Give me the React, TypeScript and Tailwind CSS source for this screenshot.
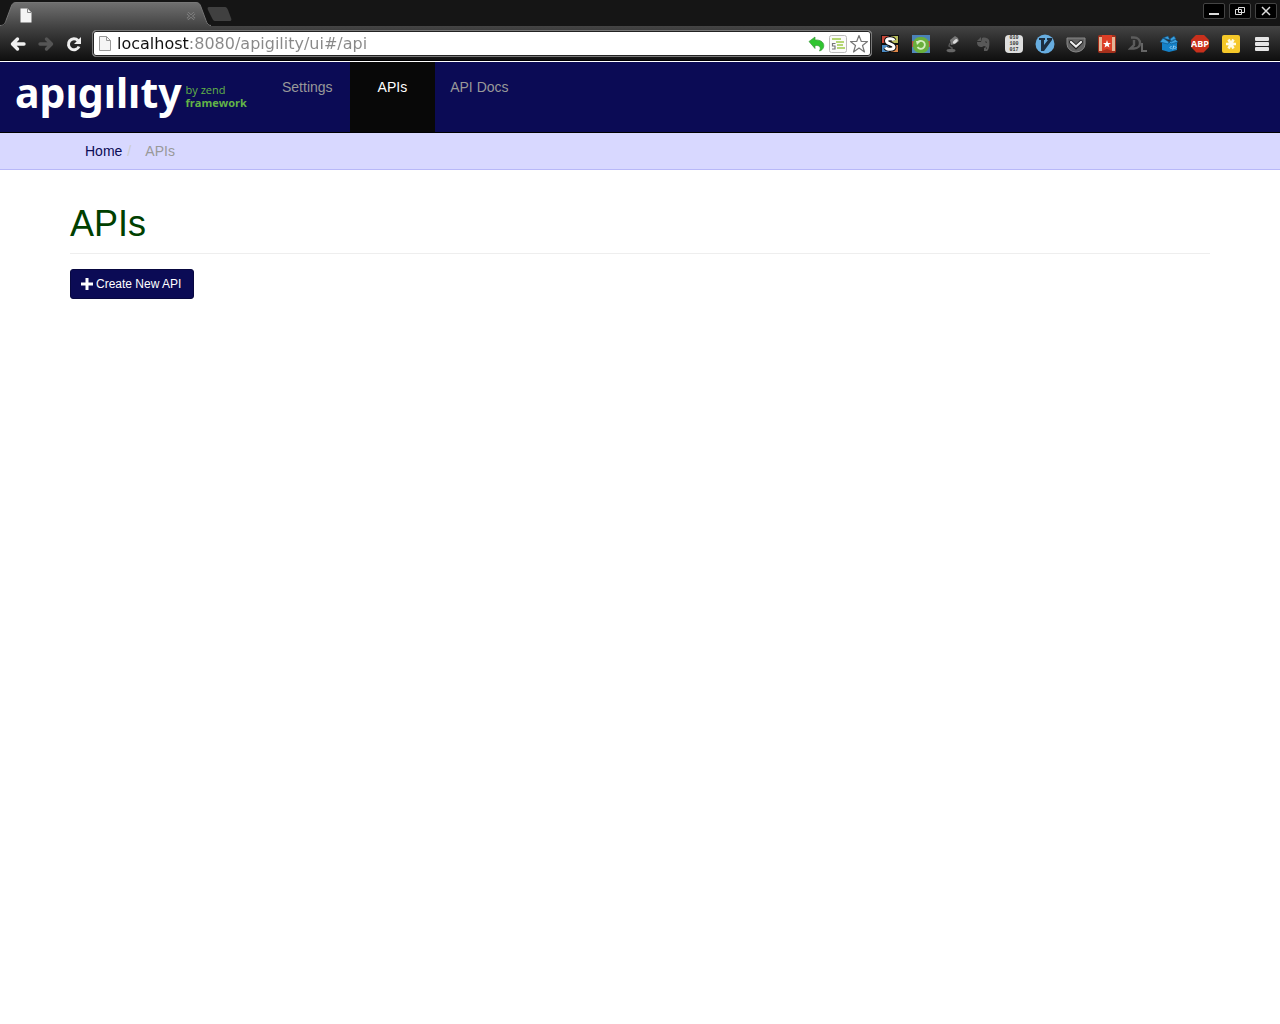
import type { ReactNode } from "react";

function ToolButton({ label, children }: { label: string; children: ReactNode }) {
  return (
    <button type="button" aria-label={label} title={label} className="flex h-5 w-5 shrink-0 items-center justify-center">
      {children}
    </button>
  );
}

function PageIcon({ fill, stroke }: { fill: string; stroke: string }) {
  return (
    <svg width="12" height="15" viewBox="0 0 12 15" aria-hidden="true">
      <path d="M.5.5h7l4 4v10H.5z" fill={fill} stroke={stroke} />
      <path d="M7.5.5v4h4" fill="none" stroke={stroke === "none" ? "#888" : stroke} />
    </svg>
  );
}

function ArrowIcon({ color, flip }: { color: string; flip?: boolean }) {
  return (
    <svg width="16" height="16" viewBox="0 0 16 16" className={flip ? "-scale-x-100" : ""} aria-hidden="true">
      <path d="M7.500 3 2.500 8l5 5M3 8h11" fill="none" stroke={color} strokeWidth="3.400" strokeLinecap="round" strokeLinejoin="round" />
    </svg>
  );
}

function TabStrip() {
  return (
    <div className="flex h-[26px] items-start justify-between bg-[#151515]">
      <div className="relative flex h-[26px] w-60 items-center">
        <svg width="240" height="26" viewBox="0 0 240 26" className="absolute inset-0" aria-hidden="true">
          <defs>
            <linearGradient id="tab" x1="0" y1="0" x2="0" y2="1">
              <stop offset="0" stopColor="#707070" />
              <stop offset="1" stopColor="#444" />
            </linearGradient>
          </defs>
          <path d="M0 26c4 0 5-2 6-5l5-14c1-3 2-4.500 5-4.500h180c3 0 4 1.500 5 4.500l5 14c1 3 2 5 5 5z" fill="url(#tab)" />
          <path d="M0 25.500c4 0 5-2 6-5l5-13.500c1-3 2-4.500 5-4.500h180c3 0 4 1.500 5 4.500l5 13.500c1 3 2 5 5 5" fill="none" stroke="#777" />
          <path d="M209 7h15c2 0 3 .500 4 3l3 8c1 2.500 0 3-2 3h-13c-2 0-3-.500-4-3l-4-8c-.800-2-.500-3 1-3z" fill="#404040" />
        </svg>
        <span className="relative ml-5 mt-1"><PageIcon fill="#f4f4f4" stroke="none" /></span>
        <button type="button" aria-label="Close tab" className="relative ml-[154px] mt-[6px] h-[10px] w-[10px]">
          <svg width="10" height="10" viewBox="0 0 10 10" aria-hidden="true">
            <path d="m1.500 2 7 6m0-6-7 6" stroke="#8c8c8c" strokeWidth="2.600" />
            <path d="m1.500 2 7 6m0-6-7 6" stroke="#555" strokeWidth="1.400" />
          </svg>
        </button>
      </div>
      <div className="mr-[3px] mt-[3px] flex gap-1">
        {["Minimize", "Restore", "Close"].map((name) => (
          <button key={name} type="button" aria-label={name} className="flex h-4 w-[22px] items-center justify-center rounded-xs border border-[#444] bg-black">
            <svg width="14" height="12" viewBox="0 0 14 12" fill="none" stroke="#ddd" aria-hidden="true">
              {name === "Minimize" && <path d="M2 9h10" strokeWidth="2" />}
              {name === "Restore" && <path d="M5.500 2.500h6v5h-6zM2.500 4.500h6v5h-6z" />}
              {name === "Close" && <path d="m3 2 8 8m0-8-8 8" strokeWidth="1.500" />}
            </svg>
          </button>
        ))}
      </div>
    </div>
  );
}

function Extensions() {
  return (
    <div className="flex items-center gap-[11px] px-2">
      <ToolButton label="Stylish">
        <svg width="20" height="20" viewBox="0 0 20 20" aria-hidden="true">
          <path d="M1 1h18v18H1z" fill="#111" />
          <path d="M2 2h7v7H2z" fill="#c8493a" /><path d="M11 2h7v7h-7z" fill="#b9bd5c" />
          <path d="M2 11h7v7H2z" fill="#4a8ac4" /><path d="M11 11h7v7h-7z" fill="#dd8548" />
          <path d="M14 6.500C13 4 6.500 4 6.500 7c0 3.200 7.500 2.500 7.500 6 0 3-7 3-8.500.500" fill="none" stroke="#111" strokeWidth="5" />
          <path d="M14 6.500C13 4 6.500 4 6.500 7c0 3.200 7.500 2.500 7.500 6 0 3-7 3-8.500.500" fill="none" stroke="#fff" strokeWidth="3" />
        </svg>
      </ToolButton>
      <ToolButton label="Session reload">
        <svg width="20" height="20" viewBox="0 0 20 20" aria-hidden="true">
          <path d="M1 1h18v6H1z" fill="#4b82b8" /><path d="M1 7h18v6H1z" fill="#b5524b" /><path d="M1 13h18v6H1z" fill="#5088bd" />
          <rect x="2" y="3" width="16" height="16" rx="7" fill="#6aaf3c" />
          <path d="M7 8a4 4 0 1 1-.500 5" fill="none" stroke="#d5efc0" strokeWidth="1.800" />
          <path d="M5 7h5l-4 4z" fill="#d5efc0" />
        </svg>
      </ToolButton>
      <ToolButton label="Desk lamp">
        <svg width="20" height="20" viewBox="0 0 20 20" aria-hidden="true">
          <path d="m8 6 5-4 3 2 1 3-4 3-4 1z" fill="#777" /><ellipse cx="13" cy="7.500" rx="3" ry="1.600" fill="#ddd" transform="rotate(-40 13 7)" />
          <path d="m8 9-1 3 3 2v2" fill="none" stroke="#555" strokeWidth="1.500" /><ellipse cx="9" cy="16.500" rx="4.500" ry="1.800" fill="#666" />
        </svg>
      </ToolButton>
      <ToolButton label="Evernote">
        <svg width="20" height="20" viewBox="0 0 20 20" aria-hidden="true">
          <path d="m4 7 4-4v4zM4 8h4l1-4c3-1 6 0 7 2 1 4 0 10-2 11h-3v-3l2-1v2c2 0 0-3-2-3l-2 1c-3 0-5-1-5-5z" fill="#585858" />
          <path d="M12 8c1-1 2 0 2 1z" fill="#222" />
        </svg>
      </ToolButton>
      <ToolButton label="Binary notes">
        <span className="flex h-[18px] w-[18px] flex-col items-center justify-center rounded-sm bg-[#dedede] font-['Liberation_Mono',monospace] text-[5px] font-bold leading-[6px] text-[#333]">
          <span>010</span><span>100</span><span>017</span>
        </span>
      </ToolButton>
      <ToolButton label="Vimium">
        <svg width="20" height="20" viewBox="0 0 20 20" aria-hidden="true">
          <circle cx="10" cy="10" r="9.500" fill="#67ade0" />
          <path d="M4 4h6v2H9v5l4-5h-1V4h5v2L9 17H6V6H4z" fill="#1c2e40" />
        </svg>
      </ToolButton>
      <ToolButton label="Pocket">
        <svg width="20" height="20" viewBox="0 0 20 20" aria-hidden="true">
          <path d="M1 4h18v6a9 8 0 0 1-18 0z" fill="#626262" stroke="#888" />
          <path d="m5 8 5 5 5-5" fill="none" stroke="#222" strokeWidth="4" strokeLinecap="round" />
          <path d="m5 8 5 4.500L15 8" fill="none" stroke="#eee" strokeWidth="2.200" strokeLinecap="round" />
        </svg>
      </ToolButton>
      <ToolButton label="Wunderlist">
        <svg width="20" height="20" viewBox="0 0 20 20" aria-hidden="true">
          <rect x="1" y="1" width="18" height="18" rx="2" fill="#a5301c" />
          <path d="M2 3h3v14H2zM15 3h3v14h-3z" fill="#e3b596" /><path d="M5 1h10v16l-5-2-5 2z" fill="#dc3e26" />
          <path d="m10 6 1 3h3l-2.300 1.700.800 2.800L10 12l-2.500 1.500.800-2.800L6 9h3z" fill="#fff" />
        </svg>
      </ToolButton>
      <ToolButton label="Delicious">
        <svg width="20" height="20" viewBox="0 0 20 20" fill="none" aria-hidden="true">
          <path d="M3 3.500h3c8 0 8 11 0 11H2.500L6 11V6" stroke="#5c5c5c" strokeWidth="2.400" />
          <path d="M14 9v8h5" stroke="#666" strokeWidth="2" />
        </svg>
      </ToolButton>
      <ToolButton label="Developer box">
        <svg width="20" height="20" viewBox="0 0 20 20" aria-hidden="true">
          <path d="m3 8 7 1v9l-7-2zM10 9l8-1v8l-8 2z" fill="#1582c9" />
          <path d="m1 8 3-4 6 4-1 2zM10 8l6-3 3 3-7 2zM4 4l5-2 2 4zM11 5l4-3 2 3-5 3z" fill="#3ba0df" stroke="#0b4d7e" strokeWidth=".600" />
          <path d="m12.500 12-1.500 1.500 1.500 1.500m3-3 1.500 1.500-1.500 1.500m-.700-3.500-1 4" fill="none" stroke="#bce4ff" strokeWidth=".800" />
        </svg>
      </ToolButton>
      <ToolButton label="Adblock Plus">
        <span className="flex h-[18px] w-[18px] items-center justify-center bg-[#c8301c] font-['Open_Sans',sans-serif] text-[9px] font-bold leading-none text-white [clip-path:polygon(30%_0,70%_0,100%_30%,100%_70%,70%_100%,30%_100%,0_70%,0_30%)]">ABP</span>
      </ToolButton>
      <ToolButton label="Starred notes">
        <svg width="20" height="20" viewBox="0 0 20 20" aria-hidden="true">
          <rect x="1" y="1" width="18" height="18" rx="2" fill="#f5c829" />
          <path d="M5 10h10M7.500 5.500l5 9m0-9-5 9" stroke="#fffbe3" strokeWidth="2.600" />
        </svg>
      </ToolButton>
      <ToolButton label="Menu">
        <svg width="14" height="16" viewBox="0 0 14 16" aria-hidden="true">
          <g fill="#e6e6e6"><rect y="1" width="14" height="4" rx="1" /><rect y="6" width="14" height="4" rx="1" /><rect y="11" width="14" height="4" rx="1" /></g>
        </svg>
      </ToolButton>
    </div>
  );
}

function Toolbar() {
  return (
    <div className="flex h-[35px] items-center border-b border-black bg-linear-to-b from-[#444] to-[#101010] pt-px">
      <div className="flex items-center gap-2 pl-2">
        <ToolButton label="Back"><ArrowIcon color="#f0f0f0" /></ToolButton>
        <ToolButton label="Forward"><ArrowIcon color="#555" flip /></ToolButton>
        <ToolButton label="Reload">
          <svg width="16" height="16" viewBox="0 0 16 16" aria-hidden="true">
            <path d="M12 4.500A5.500 5.500 0 1 0 13 10.500" fill="none" stroke="#eee" strokeWidth="3" />
            <path d="M15 1v7H8z" fill="#eee" />
          </svg>
        </ToolButton>
      </div>
      <form className="ml-2 flex h-[27px] min-w-0 flex-1 items-center rounded-sm border border-[#777] bg-white pl-1 pr-0.5 ring-1 ring-inset ring-[#222]" onSubmit={(e) => e.preventDefault()}>
        <span className="ml-0.5"><PageIcon fill="#f5f5f5" stroke="#999" /></span>
        <input
          aria-label="Address"
          defaultValue="localhost:8080/apigility/ui#/api"
          className="ml-1.5 h-5 min-w-0 flex-1 bg-[linear-gradient(90deg,#111_73px,#888_73px)] bg-clip-text font-['DejaVu_Sans',sans-serif] text-base leading-5 text-transparent outline-none"
        />
        <div className="flex items-center gap-px">
          <ToolButton label="Go back">
            <svg width="20" height="20" viewBox="0 0 20 20" aria-hidden="true">
              <path d="M2 7.500 8 3v3c6-.500 10 3 8.500 7.500-.600 1.500-2 3-4 3.500 1.500-3 1-6-4.500-5.500v3z" fill="#2fc52f" stroke="#3c9a3c" strokeWidth=".700" />
            </svg>
          </ToolButton>
          <ToolButton label="Reading list">
            <svg width="20" height="20" viewBox="0 0 20 20" fill="none" aria-hidden="true">
              <rect x="1.500" y="1.500" width="17" height="17" rx="2" fill="#fbfbfb" stroke="#bbb" />
              <path d="M4 5h9M8 8h8M9 11h6M9 14h8" stroke="#9fcc49" strokeWidth="1.600" />
              <path d="M7.500 9.500H4.500v2.500h2.500v3H4" stroke="#777" strokeWidth="1.200" />
            </svg>
          </ToolButton>
          <ToolButton label="Bookmark">
            <svg width="20" height="20" viewBox="0 0 20 20" aria-hidden="true">
              <path d="m10 1.500 2.300 6H18.500l-5 4 2 6.500-5.500-4L4.500 18l2-6.500-5-4h6.200z" fill="#fff" stroke="#777" strokeWidth="1.200" strokeLinejoin="round" />
            </svg>
          </ToolButton>
        </div>
      </form>
      <Extensions />
    </div>
  );
}

function SiteHeader() {
  return (
    <header className="flex h-[72px] items-stretch border-b border-t border-b-black border-t-white bg-[#0b0b55]">
      <a href="#/" aria-label="Apigility by Zend Framework" className="flex w-[267px] items-center gap-1 pb-[10px] pl-[15px] font-['Noto_Sans',sans-serif]">
        <span className="text-[41px] font-bold leading-[60px] text-white">apıgılıty</span>
        <span className="flex flex-col pt-2 font-['Open_Sans',sans-serif] text-[11px] leading-[13px] text-[#62b447]">
          <span>by zend</span>
          <span className="font-bold">framework</span>
        </span>
      </a>
      <nav aria-label="Main" className="flex leading-5 text-[#999]">
        <a href="#/settings" className="pl-[15px] pr-[17px] pt-[15px]">Settings</a>
        <a href="#/api" aria-current="page" className="bg-[#080808] px-7 pt-[15px] text-white">APIs</a>
        <a href="#/docs" className="px-[15px] pt-[15px]">API Docs</a>
      </nav>
    </header>
  );
}

export default function App() {
  return (
    <div className="min-h-screen bg-white font-['Liberation_Sans',sans-serif] text-sm">
      <TabStrip />
      <Toolbar />
      <SiteHeader />
      <nav aria-label="Breadcrumb" className="border-b border-[#b8b8f8] bg-[#d8d8ff]">
        <ol className="mx-auto flex max-w-[1170px] px-[30px] py-2 leading-5 text-[#999]">
          <li><a href="#/" className="text-[#0b0b55]">Home</a></li>
          <li aria-hidden="true" className="w-[23px] pl-[5px] text-[#ccc]">/</li>
          <li aria-current="page">APIs</li>
        </ol>
      </nav>
      <main className="mx-auto max-w-[1170px] px-[15px] pt-[34px]">
        <h1 className="border-b border-[#eee] pb-[9px] text-4xl leading-10 text-[#004000]">APIs</h1>
        <button type="button" className="mt-[15px] flex h-[30px] items-center gap-[3px] rounded-[3px] border border-[#080840] bg-[#0b0b55] pl-[10px] pr-3 text-xs text-white">
          <svg width="12" height="12" viewBox="0 0 12 12" aria-hidden="true"><path d="M4.500 0h3v4.500H12v3H7.500V12h-3V7.500H0v-3h4.500z" fill="#fff" /></svg>
          Create New API
        </button>
      </main>
    </div>
  );
}
